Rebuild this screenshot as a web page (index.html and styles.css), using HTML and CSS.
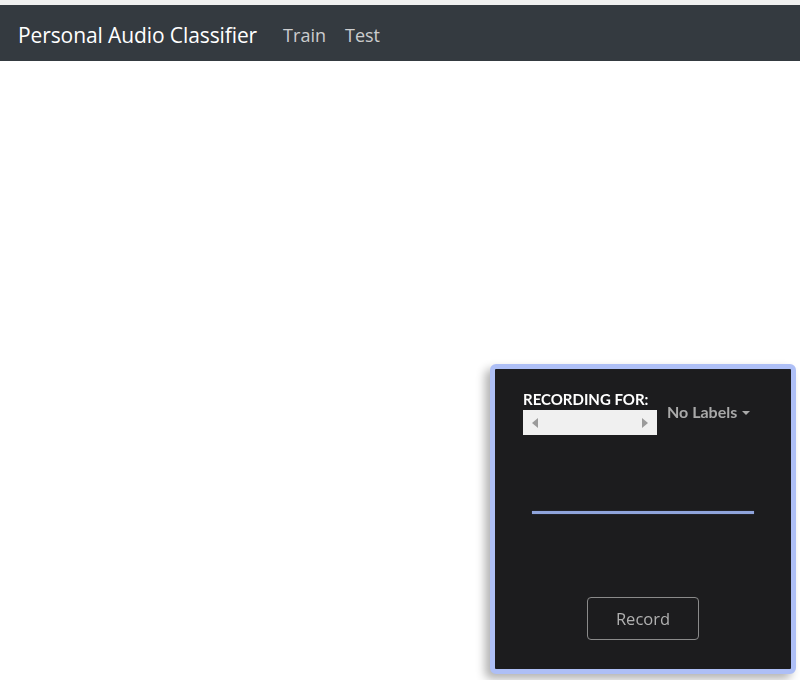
FILE: index.html
```html
<!DOCTYPE html>
<html>
<head>
<meta charset="utf-8">
<link rel="stylesheet" href="styles.css">
</head>
<body>
<div class="topstrip"></div>
<nav class="navbar">
  <span class="brand">Personal Audio Classifier</span>
  <a class="nav-link">Train</a>
  <a class="nav-link">Test</a>
</nav>
<div class="recorder">
  <div class="rec-head">
    <div class="rec-left">
      <div class="rec-label">RECORDING FOR:</div>
      <div class="scroller">
        <svg width="8" height="12" viewBox="0 0 8 12"><path d="M7 1 L1 6 L7 11 Z" fill="#9a9a9a"/></svg>
        <svg width="8" height="12" viewBox="0 0 8 12"><path d="M1 1 L7 6 L1 11 Z" fill="#9a9a9a"/></svg>
      </div>
    </div>
    <div class="labels">No Labels <span class="caret"></span></div>
  </div>
  <div class="wave"></div>
  <div class="btn-row"><button class="record">Record</button></div>
</div>
</body>
</html>
```
FILE: styles.css
```css
html, body { margin: 0; padding: 0; background: #fff; }
body { font-family: "Open Sans", "Noto Sans", sans-serif; }
.topstrip { height: 5px; background: #f0f0f0; }
.navbar {
  height: 56px;
  background: #343a40;
  display: flex;
  align-items: center;
  padding: 4px 18px 0 18px;
  box-sizing: border-box;
}
.brand { color: #fff; font-size: 21px; margin-right: 26px; letter-spacing: -0.1px; }
.nav-link { color: rgba(255,255,255,0.75); font-size: 18px; margin-right: 19px; }
.recorder {
  position: fixed;
  left: 490px;
  top: 364px;
  width: 306px;
  height: 310px;
  box-sizing: border-box;
  background: #1c1c1e;
  border: 5px solid #aebff6;
  border-radius: 6px;
  box-shadow: -5px 5px 10px rgba(0,0,0,0.3);
  padding: 23px 28px 0 28px;
  display: flex;
  flex-direction: column;
}
.rec-head { display: flex; align-items: flex-start; }
.rec-label { color: #fff; font-weight: 700; font-size: 15px; letter-spacing: 0; font-family: "Lato", sans-serif; line-height: 14px; margin-bottom: 4px; }
.scroller {
  width: 134px; height: 25px; background: #f0f0f0;
  display: flex; justify-content: space-between; align-items: center;
  padding: 0 8px; box-sizing: border-box;
}
.labels { color: #a9a9a9; font-weight: 700; font-size: 16px; font-family: "Lato", sans-serif; margin-left: 10px; margin-top: 10px; letter-spacing: 0; }
.caret { display: inline-block; width: 0; height: 0; border-left: 4px solid transparent; border-right: 4px solid transparent; border-top: 4px solid #a9a9a9; vertical-align: 3px; margin-left: 1px; }
.wave { height: 3px; background: #8fa4dc; margin: 76px 9px 0 9px; box-shadow: 0 0 1px #5a6a99; }
.btn-row { display: flex; justify-content: center; margin-top: 83px; padding-left: 0; }
.record {
  width: 112px; height: 43px; background: transparent; border: 1px solid #8a8a8a; border-radius: 4px;
  color: #b0b0b0; font-size: 16.5px; font-family: "Open Sans", sans-serif;
}
```
